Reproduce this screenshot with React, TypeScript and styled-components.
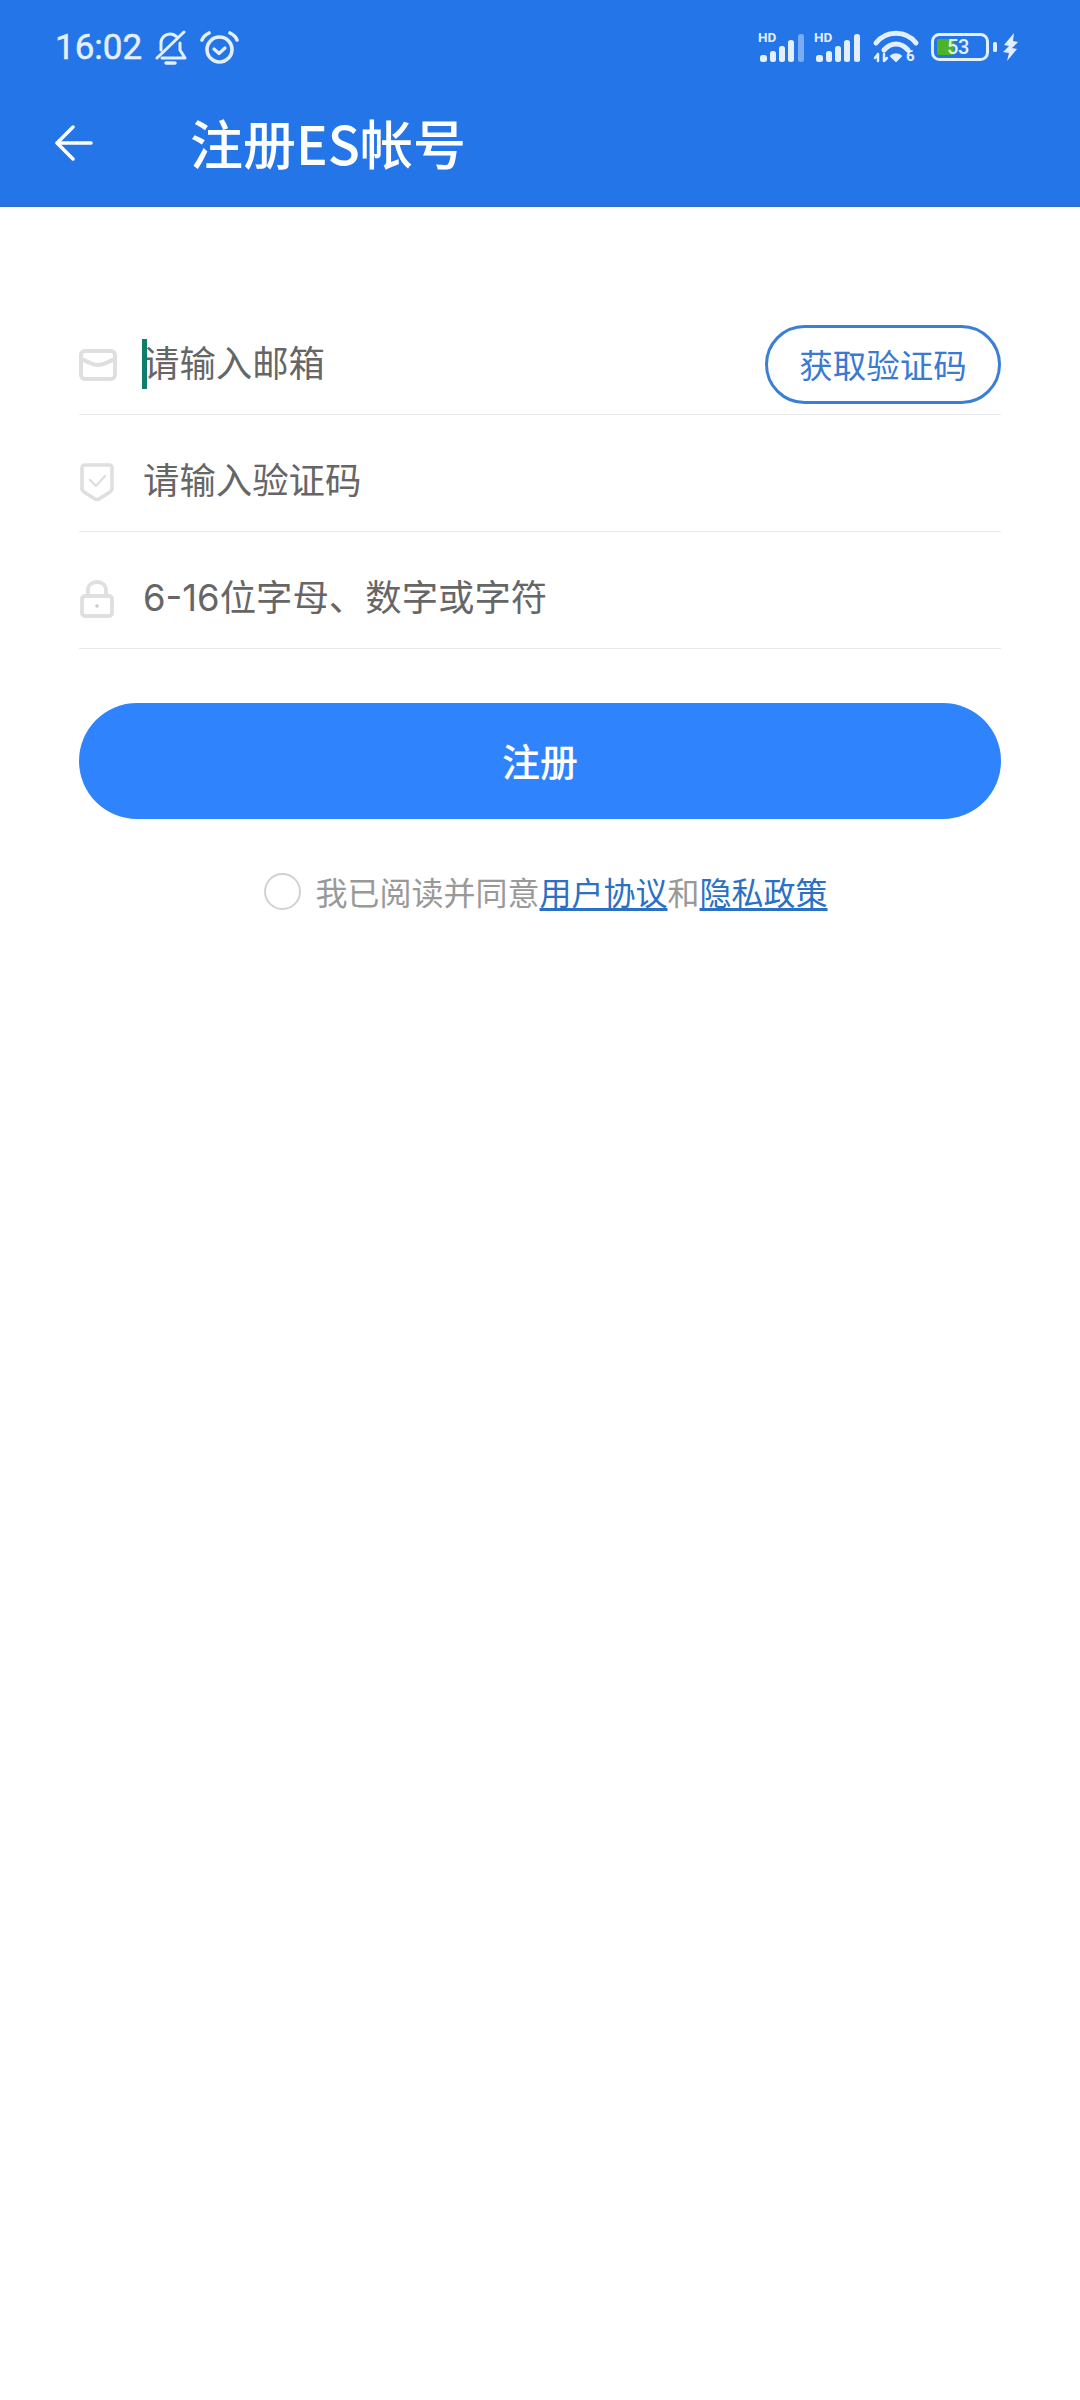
import React from "react";
import styled, { createGlobalStyle } from "styled-components";

const Global = createGlobalStyle`
  html, body { margin: 0; padding: 0; background: #fff; }
  body { font-family: "Noto Sans CJK SC", "Noto Sans", sans-serif; }
  * { box-sizing: border-box; }
`;

const Page = styled.div`
  width: 1080px;
  height: 2400px;
  background: #fff;
  display: flex;
  flex-direction: column;
`;

const Header = styled.header`
  height: 207px;
  background: #2375e8;
  border-bottom: 1px solid #2a6fc4;
  color: #fff;
  display: flex;
  flex-direction: column;
`;

const StatusBar = styled.div`
  height: 94px;
  padding: 0 62px 0 55px;
  display: flex;
  align-items: center;
  justify-content: space-between;
  color: #e3efff;
`;

const StatusGroup = styled.div<{ $gap: number }>`
  display: flex;
  align-items: center;
  gap: ${(p) => p.$gap}px;
`;

const Time = styled.span`
  font-family: Roboto, "Noto Sans", sans-serif;
  font-size: 35px;
  font-weight: 400;
  letter-spacing: 0;
  line-height: 1;
  -webkit-text-stroke: 0.5px #e3efff;
`;

const TitleBar = styled.div`
  height: 100px;
  padding: 0 0 3px 55px;
  display: flex;
  align-items: center;
`;

const Title = styled.h1`
  margin: 0 0 0 97px;
  font-size: 53px;
  font-weight: 500;
  line-height: 1;
  color: #fff;
  font-family: "Noto Sans CJK SC", "Noto Sans", sans-serif;
`;

const Form = styled.main`
  padding: 91px 79px 0;
  display: flex;
  flex-direction: column;
`;

const Row = styled.div`
  position: relative;
  height: 117px;
  padding-top: 14px;
  display: flex;
  align-items: center;
  border-bottom: 1px solid #e9e9e9;
`;

const IconSlot = styled.div`
  width: 64px;
  flex: none;
  padding-top: 4px;
  display: flex;
  align-items: center;
`;

const Hint = styled.span`
  flex: 1;
  font-family: Inter, "Noto Sans CJK SC", sans-serif;
  font-size: 36.4px;
  line-height: 1;
  color: #666;
  margin-top: 3px;
`;

const Caret = styled.span`
  position: absolute;
  left: 63px;
  top: 41px;
  width: 5px;
  height: 50px;
  background: #0f7d6c;
`;

const CodeButton = styled.button`
  width: 236px;
  height: 79px;
  border: 3px solid #3a7fd6;
  border-radius: 40px;
  background: #fff;
  color: #3a7ad2;
  font-family: inherit;
  font-size: 33.5px;
  line-height: 1;
  padding: 0;
  margin-top: 2px;
`;

const Submit = styled.button`
  margin-top: 54px;
  width: 922px;
  height: 116px;
  border: 0;
  border-radius: 58px;
  background: #2f84fe;
  color: #fff;
  font-family: inherit;
  font-size: 38px;
  font-weight: 500;
  padding: 0 0 3px;
`;

const Agreement = styled.div`
  margin-top: 53px;
  display: flex;
  align-items: center;
  justify-content: center;
  padding-left: 12px;
  font-size: 32px;
  line-height: 38px;
  color: #999;
`;

const Radio = styled.span`
  width: 37px;
  height: 37px;
  flex: none;
  margin-right: 14px;
  border: 2.5px solid #d2d2d2;
  border-radius: 50%;
`;

const AgreementLink = styled.a`
  color: #2a70c4;
  text-decoration: underline;
  text-underline-offset: 3px;
`;

const FG = "#e3efff";

const BellOff = () => (
  <svg width="32" height="35" viewBox="0 0 32 35" fill="none" stroke={FG} strokeWidth="3" strokeLinecap="round" strokeLinejoin="round">
    <path d="M6 20V13C6 7 11 4 15 4c3 0 5 1 7 3" />
    <path d="M25 13v7l5 8H7" />
    <path d="M2 28 29 2" />
    <path d="M11 33h9" strokeWidth="3.500" />
  </svg>
);

const Alarm = () => (
  <svg width="39" height="33" viewBox="0 0 39 33" fill="none" stroke={FG} strokeWidth="3.600" strokeLinecap="round" strokeLinejoin="round">
    <circle cx="19.500" cy="18.500" r="12.500" />
    <path d="M14 18l5 4.500 6-5.500" strokeWidth="3.200" />
    <path d="M2 9c1-3 3-5 7-7" />
    <path d="M37 9c-1-3-3-5-7-7" />
  </svg>
);

const Signal = ({ dim }: { dim?: boolean }) => (
  <svg width="47" height="36" viewBox="0 -4 47 36">
    <text x="0" y="9" fontFamily="Roboto, sans-serif" fontSize="13.500" fontWeight="700" fill={FG}>HD</text>
    <rect x="2" y="22" width="7" height="7" rx="2.500" fill={FG} />
    <rect x="12" y="18" width="6" height="11" rx="2.500" fill={FG} />
    <rect x="21" y="13" width="6" height="16" rx="2.500" fill={FG} />
    <rect x="30" y="7" width="6" height="22" rx="2.500" fill={FG} />
    <rect x="40" y="1" width="6" height="28" rx="2.500" fill={FG} opacity={dim ? 0.45 : 1} />
  </svg>
);

const Wifi = () => (
  <svg width="52" height="34" viewBox="-4 0 52 34" fill="none">
    <path d="M2 13C12 0 32 0 42 13" stroke={FG} strokeWidth="5" strokeLinecap="round" />
    <path d="M10 20C17 12 27 12 34 20" stroke={FG} strokeWidth="5" strokeLinecap="round" />
    <path d="M17 26c3-2 7-2 10 0l-5 5z" fill={FG} stroke={FG} strokeWidth="2" strokeLinejoin="round" />
    <path d="M4 24v7M1 28l3-4M10 24v7M10 31l3-3" stroke={FG} strokeWidth="2.500" strokeLinecap="round" />
    <text x="32" y="31" fontFamily="Roboto, sans-serif" fontSize="15" fontWeight="700" fill={FG}>6</text>
  </svg>
);

const Battery = () => (
  <svg width="66" height="28" viewBox="0 0 66 28">
    <rect x="1.500" y="1.500" width="55" height="25" rx="7" fill="none" stroke={FG} strokeWidth="3" />
    <rect x="6" y="6" width="17" height="16" rx="1.500" fill="#4cb227" />
    <rect x="62" y="9" width="4" height="10" rx="1.500" fill={FG} />
    <text x="16" y="21" fontFamily="Roboto, sans-serif" fontSize="20" fontWeight="500" fill="#e0f3d6">5</text>
    <text x="27" y="21" fontFamily="Roboto, sans-serif" fontSize="20" fontWeight="500" fill={FG}>3</text>
  </svg>
);

const Bolt = () => (
  <svg width="15" height="28" viewBox="0 0 15 28" fill={FG}>
    <path d="M11 0 1 12l5 1-6 6 6 1-2 8 10-12-5-1 6-6-5-1z" />
  </svg>
);

const BackArrow = () => (
  <svg width="38" height="36" viewBox="0 0 38 36" fill="none" stroke="#fff" strokeWidth="3.500" strokeLinecap="round" strokeLinejoin="round">
    <path d="M36 18H3" />
    <path d="M18 2 2 18l16 16" />
  </svg>
);

const ICON = "#dfdfdf";

const Mail = () => (
  <svg width="38" height="32" viewBox="0 0 38 32" fill="none" stroke={ICON} strokeWidth="4" strokeLinejoin="round" strokeLinecap="round">
    <rect x="2" y="2" width="34" height="28" rx="4" />
    <path d="M2 10c6 2 11 6 17 6s11-4 17-6" />
  </svg>
);

const Shield = () => (
  <svg width="36" height="38" viewBox="-1 0 36 38" fill="none" stroke={ICON} strokeWidth="3.600" strokeLinejoin="round" strokeLinecap="round">
    <path d="M5 2h24c2 0 3 1 3 3v21c0 1-1 2-2 3l-11 7c-1 .700-3 .700-4 0L4 29c-1-1-2-2-2-3V5c0-2 1-3 3-3z" />
    <path d="M10 17l6 6 9-10" strokeWidth="2.400" />
  </svg>
);

const Lock = () => (
  <svg width="36" height="38" viewBox="-1 0 36 38" fill="none" stroke={ICON} strokeWidth="3.800" strokeLinejoin="round" strokeLinecap="round">
    <rect x="2" y="16" width="30" height="20" rx="3" />
    <path d="M8 16V10c0-5 4-8 9-8s9 3 9 8v6" />
    <circle cx="17" cy="26" r="1" fill={ICON} stroke="#c9c9c9" strokeWidth="1.500" />
  </svg>
);

export default function App() {
  return (
    <Page>
      <Global />
      <Header>
        <StatusBar>
          <StatusGroup $gap={13}>
            <Time>16:02</Time>
            <BellOff />
            <Alarm />
          </StatusGroup>
          <StatusGroup $gap={9}>
            <Signal dim />
            <Signal />
            <Wifi />
            <StatusGroup $gap={6}>
              <Battery />
              <Bolt />
            </StatusGroup>
          </StatusGroup>
        </StatusBar>
        <TitleBar>
          <BackArrow />
          <Title>注册ES帐号</Title>
        </TitleBar>
      </Header>
      <Form>
        <Row>
          <IconSlot><Mail /></IconSlot>
          <Caret />
          <Hint>请输入邮箱</Hint>
          <CodeButton>获取验证码</CodeButton>
        </Row>
        <Row>
          <IconSlot><Shield /></IconSlot>
          <Hint>请输入验证码</Hint>
        </Row>
        <Row>
          <IconSlot><Lock /></IconSlot>
          <Hint>6-16位字母、数字或字符</Hint>
        </Row>
        <Submit>注册</Submit>
        <Agreement>
          <Radio />
          我已阅读并同意<AgreementLink>用户协议</AgreementLink>和<AgreementLink>隐私政策</AgreementLink>
        </Agreement>
      </Form>
    </Page>
  );
}
